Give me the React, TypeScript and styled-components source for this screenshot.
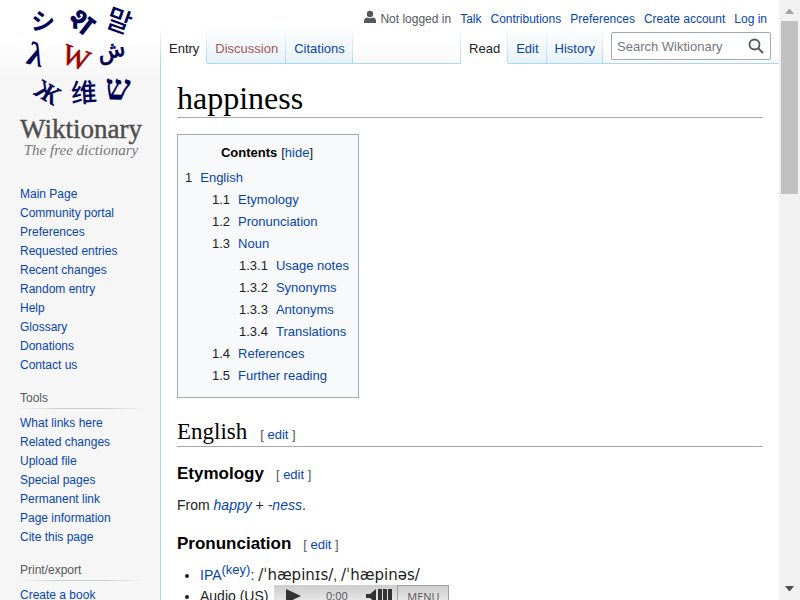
import React from "react";
import styled, { createGlobalStyle } from "styled-components";

const sans = `"Liberation Sans", Arial, sans-serif`;
const serif = `"Liberation Serif", Georgia, serif`;

const GlobalStyle = createGlobalStyle`
  * { box-sizing: border-box; }
  html, body { margin: 0; padding: 0; }
  body {
    font-family: ${sans};
    font-size: 14px;
    line-height: 22px;
    color: #202122;
    background: #f6f6f6;
    overflow: hidden;
  }
  a { color: #0645ad; text-decoration: none; }
  a:hover { text-decoration: underline; }
  ul, ol { list-style: none; margin: 0; padding: 0; }
  button { font-family: inherit; cursor: pointer; }
`;

const Page = styled.div`
  display: flex;
  height: 100vh;
  overflow: hidden;
  background: #f6f6f6 linear-gradient(#fff 50%, #f6f6f6 100%) 0 0 / 100% 80px no-repeat;
`;

const Sidebar = styled.aside`
  flex: 0 0 160px;
  font-size: 12px;
  line-height: 19px;
`;

const LogoLink = styled.a`
  display: block;
  height: 160px;
  svg { display: block; }
`;

const MainNav = styled.nav`
  padding: 25px 8px 0 20px;
`;

const Portal = styled.nav`
  padding: 14px 16px 0 20px;
`;

const PortalTitle = styled.h3`
  margin: 0 0 5px;
  border-bottom: 1px solid;
  border-image: linear-gradient(to right, #c8ccd100, #c8ccd1 33%, #c8ccd1 66%, #c8ccd100) 1;
  font-size: 12px;
  line-height: 19px;
  font-weight: 400;
  color: #54595d;
`;

const Column = styled.div`
  flex: 1;
  min-width: 0;
  display: flex;
  flex-direction: column;
`;

const Header = styled.header`
  flex: none;
  background: linear-gradient(#a7d7f9, #a7d7f9) 0 100% / 100% 1px no-repeat;
`;

const Personal = styled.ul`
  display: flex;
  justify-content: flex-end;
  gap: 9px;
  padding: 12px 12px 0 0;
  font-size: 12px;
  line-height: 14px;
  white-space: nowrap;
`;

const Status = styled.li`
  display: flex;
  gap: 4px;
  color: #54595d;
  svg { margin-top: -2px; }
`;

const NavRow = styled.div`
  display: flex;
  height: 38px;
`;

const Tabs = styled.ul<{ $end?: boolean }>`
  display: flex;
  margin-left: ${(p) => (p.$end ? "auto" : "0")};
  padding-left: 1px;
  background: linear-gradient(#fff, #a7d7f9) 0 0 / 1px 100% no-repeat;
`;

const Tab = styled.li<{ $active?: boolean }>`
  padding: 15px 8px 0;
  border-bottom: 1px solid ${(p) => (p.$active ? "#fff" : "#a7d7f9")};
  background: ${(p) =>
    p.$active
      ? "linear-gradient(#fff, #a7d7f9) 100% 0 / 1px 100% no-repeat, #fff"
      : "linear-gradient(#fff, #a7d7f9) 100% 0 / 1px 100% no-repeat, linear-gradient(#fff, #e8f2f8)"};
  font-size: 13px;
  line-height: 16px;
`;

const TabLink = styled.a<{ $tone?: "plain" | "missing" }>`
  color: ${(p) => (p.$tone === "plain" ? "#202122" : p.$tone === "missing" ? "#a55858" : "#0645ad")};
`;

const SearchForm = styled.form`
  display: flex;
  width: 160px;
  height: 28px;
  margin: 6px 8px 0;
  border: 1px solid #a2a9b1;
  border-radius: 2px;
  background: #fff;
`;

const SearchInput = styled.input`
  flex: 1;
  min-width: 0;
  padding: 0 0 0 5px;
  border: 0;
  outline: 0;
  background: none;
  font: 13px ${sans};
  color: #202122;
  &::placeholder { color: #72777d; opacity: 1; }
`;

const SearchButton = styled.button`
  display: grid;
  place-items: center;
  width: 28px;
  padding: 0;
  border: 0;
  background: none;
`;

const Content = styled.main`
  flex: 1;
  padding: 16px;
  border-left: 1px solid #a7d7f9;
  background: #fff;
`;

const Title = styled.h1`
  margin: 0 0 16px;
  border-bottom: 1px solid #a2a9b1;
  font: 400 32px/37px ${serif};
  color: #000;
`;

const Toc = styled.nav`
  width: fit-content;
  padding: 7px 9px 10px 7px;
  border: 1px solid #a2a9b1;
  background: #f8f9fa;
  font-size: 13px;
`;

const TocHead = styled.div`
  display: flex;
  justify-content: center;
  gap: 4px;
  margin-bottom: 3px;
`;

const TocTitle = styled.h2`
  margin: 0;
  font-size: 13px;
  line-height: 22px;
  color: #000;
`;

const TextButton = styled.button`
  padding: 0;
  border: 0;
  background: none;
  font-size: 13px;
  color: #0645ad;
`;

const TocItem = styled.li<{ $level: number }>`
  padding-left: ${(p) => (p.$level - 1) * 27}px;
  a { display: flex; gap: 8px; }
`;

const TocNumber = styled.span`
  color: #202122;
`;

const SectionTitle = styled.h2`
  display: flex;
  align-items: baseline;
  gap: 13px;
  margin: 17px 0 13px;
  padding-top: 2px;
  border-bottom: 1px solid #a2a9b1;
  font: 400 23px/29px ${serif};
  color: #000;
`;

const SubTitle = styled.h3`
  display: flex;
  align-items: baseline;
  gap: 12px;
  margin: 0 0 6px;
  font-size: 17px;
  line-height: 28px;
  color: #000;
`;

const EditMark = styled.span`
  font: 400 13px ${sans};
  color: #54595d;
`;

const Paragraph = styled.p`
  margin: 0 0 14px;
`;

const Sounds = styled.ul`
  margin-top: -1px;
  padding-left: 23px;
  list-style: disc;
`;

const Sound = styled.li`
  height: 22px;
  white-space: nowrap;
`;

const Key = styled.sup`
  font-size: 13px;
  line-height: 1;
`;

const Ipa = styled.span`
  font-family: "DejaVu Sans", sans-serif;
  font-size: 15px;
`;

const AudioLine = styled.div`
  display: flex;
  gap: 6px;
`;

const Player = styled.div`
  display: flex;
  align-items: stretch;
  width: 175px;
  height: 22px;
  background: linear-gradient(#cdcdcd, #f0f0f0);
  font: 11px "Open Sans", sans-serif;
  color: #555;
`;

const PlayerButton = styled.button<{ $width: number }>`
  display: grid;
  place-items: center;
  width: ${(p) => p.$width}px;
  padding: 0;
  border: 0;
  background: none;
`;

const Time = styled.span`
  flex: 1;
  text-align: center;
  line-height: 22px;
`;

const MenuButton = styled.button`
  width: 52px;
  padding: 0;
  border: 1px solid #a0a0a0;
  background: linear-gradient(#cdcdcd, #f0f0f0);
  font: 11px "Open Sans", sans-serif;
  color: #555;
`;

const Scrollbar = styled.div`
  flex: 0 0 21px;
  display: flex;
  flex-direction: column;
  justify-content: space-between;
  align-items: center;
  padding: 9px 0;
  background: #f1f1f1;
  svg { display: block; flex: none; }
`;

const Track = styled.div`
  flex: 1;
  width: 17px;
  margin: 7px 0;
`;

const Thumb = styled.div`
  height: 31%;
  background: #c1c1c1;
`;

const glyphs: { text: string; x: number; y: number; turn: number; size: number; font: string; fill?: string; weight?: number }[] = [
  { text: "シ", x: 43, y: 22, turn: 5, size: 24, font: "Noto Sans CJK JP", weight: 700 },
  { text: "श", x: 82, y: 21, turn: 38, size: 31, font: "Noto Sans Devanagari", weight: 700 },
  { text: "말", x: 119, y: 21, turn: 20, size: 27, font: "Noto Sans CJK KR", weight: 500 },
  { text: "λ", x: 36, y: 54, turn: 14, size: 33, font: "Liberation Serif", weight: 700 },
  { text: "W", x: 76, y: 57, turn: 20, size: 29, font: "Liberation Serif", fill: "#9b0000" },
  { text: "ش", x: 111, y: 50, turn: -12, size: 23, font: "DejaVu Sans" },
  { text: "Ж", x: 48, y: 92, turn: 30, size: 26, font: "Liberation Serif" },
  { text: "维", x: 84, y: 93, turn: -3, size: 26, font: "Noto Sans CJK SC", weight: 500 },
  { text: "ש", x: 118, y: 87, turn: 2, size: 36, font: "Liberation Serif", weight: 700 },
];

function Logo() {
  return (
    <svg width="160" height="160" viewBox="0 0 160 160" role="img" aria-label="Wiktionary, the free dictionary">
      {glyphs.map((g) => (
        <text
          key={g.text}
          x={g.x}
          y={g.y}
          dy="0.35em"
          textAnchor="middle"
          transform={`rotate(${g.turn} ${g.x} ${g.y})`}
          fontFamily={`"${g.font}", sans-serif`}
          fontSize={g.size}
          fontWeight={g.weight ?? 400}
          fill={g.fill ?? "#000055"}
          stroke={g.weight ? "none" : g.fill ?? "#000055"}
          strokeWidth="0.7"
        >
          {g.text}
        </text>
      ))}
      <text x="81" y="138" textAnchor="middle" fontFamily={serif} fontSize="27" fill="#4d4d4d" stroke="#4d4d4d" strokeWidth="0.4">Wiktionary</text>
      <text x="81" y="155" textAnchor="middle" fontFamily={serif} fontSize="15" fontStyle="italic" fill="#777">The free dictionary</text>
    </svg>
  );
}

function Links({ items }: { items: string[] }) {
  return (
    <ul>
      {items.map((item) => (
        <li key={item}><a href="#">{item}</a></li>
      ))}
    </ul>
  );
}

function EditLink() {
  return <EditMark>[ <a href="#">edit</a> ]</EditMark>;
}

const mainLinks = ["Main Page", "Community portal", "Preferences", "Requested entries", "Recent changes", "Random entry", "Help", "Glossary", "Donations", "Contact us"];
const toolLinks = ["What links here", "Related changes", "Upload file", "Special pages", "Permanent link", "Page information", "Cite this page"];
const accountLinks = ["Talk", "Contributions", "Preferences", "Create account", "Log in"];
const contents = [
  ["1", "English"],
  ["1.1", "Etymology"],
  ["1.2", "Pronunciation"],
  ["1.3", "Noun"],
  ["1.3.1", "Usage notes"],
  ["1.3.2", "Synonyms"],
  ["1.3.3", "Antonyms"],
  ["1.3.4", "Translations"],
  ["1.4", "References"],
  ["1.5", "Further reading"],
];

export default function App() {
  return (
    <>
      <GlobalStyle />
      <Page>
        <Sidebar>
          <LogoLink href="#"><Logo /></LogoLink>
          <MainNav><Links items={mainLinks} /></MainNav>
          <Portal>
            <PortalTitle>Tools</PortalTitle>
            <Links items={toolLinks} />
          </Portal>
          <Portal>
            <PortalTitle>Print/export</PortalTitle>
            <Links items={["Create a book"]} />
          </Portal>
        </Sidebar>
        <Column>
          <Header>
            <Personal>
              <Status>
                <svg width="12" height="14" viewBox="0 0 12 14" fill="#54595d">
                  <circle cx="6" cy="4" r="3.2" />
                  <path d="M0 13v-2C0 9 1 8 3 7.500c1.800 1 4.200 1 6 0 2 .5 3 1.500 3 3.500v2z" />
                </svg>
                Not logged in
              </Status>
              {accountLinks.map((item) => (
                <li key={item}><a href="#">{item}</a></li>
              ))}
            </Personal>
            <NavRow>
              <Tabs>
                <Tab $active><TabLink href="#" $tone="plain">Entry</TabLink></Tab>
                <Tab><TabLink href="#" $tone="missing">Discussion</TabLink></Tab>
                <Tab><TabLink href="#">Citations</TabLink></Tab>
              </Tabs>
              <Tabs $end>
                <Tab $active><TabLink href="#" $tone="plain">Read</TabLink></Tab>
                <Tab><TabLink href="#">Edit</TabLink></Tab>
                <Tab><TabLink href="#">History</TabLink></Tab>
              </Tabs>
              <SearchForm role="search">
                <SearchInput type="search" placeholder="Search Wiktionary" aria-label="Search Wiktionary" />
                <SearchButton type="button" aria-label="Search">
                  <svg width="16" height="16" viewBox="0 0 16 16" fill="none" stroke="#54595d" strokeWidth="1.8">
                    <circle cx="6.500" cy="6.500" r="5" />
                    <path d="M10 10l5 5" />
                  </svg>
                </SearchButton>
              </SearchForm>
            </NavRow>
          </Header>
          <Content>
            <Title>happiness</Title>
            <Toc aria-label="Contents">
              <TocHead>
                <TocTitle>Contents</TocTitle>
                <span>[<TextButton type="button">hide</TextButton>]</span>
              </TocHead>
              <ol>
                {contents.map(([number, label]) => (
                  <TocItem key={number} $level={number.split(".").length}>
                    <a href="#"><TocNumber>{number}</TocNumber>{label}</a>
                  </TocItem>
                ))}
              </ol>
            </Toc>
            <SectionTitle>English <EditLink /></SectionTitle>
            <SubTitle>Etymology <EditLink /></SubTitle>
            <Paragraph>From <i><a href="#">happy</a></i> + <i><a href="#">-ness</a></i>.</Paragraph>
            <SubTitle>Pronunciation <EditLink /></SubTitle>
            <Sounds>
              <Sound>
                <a href="#">IPA</a><Key><a href="#">(key)</a></Key>: <Ipa>/ˈhæpinɪs/</Ipa>, <Ipa>/ˈhæpinəs/</Ipa>
              </Sound>
              <Sound>
                <AudioLine>
                  Audio (US)
                  <Player>
                    <PlayerButton type="button" aria-label="Play" $width={38}>
                      <svg width="15" height="14" viewBox="0 0 15 14" fill="#333"><path d="M0 0l15 7-15 7z" /></svg>
                    </PlayerButton>
                    <Time>0:00</Time>
                    <PlayerButton type="button" aria-label="Volume" $width={36}>
                      <svg width="27" height="14" viewBox="0 0 27 14" fill="#333">
                        <path d="M0 5h4l6-5v14l-6-5H0zM12 0h4v14h-4zM17 0h4v14h-4zM22 0h4v14h-4z" />
                      </svg>
                    </PlayerButton>
                    <MenuButton type="button">MENU</MenuButton>
                  </Player>
                </AudioLine>
              </Sound>
            </Sounds>
          </Content>
        </Column>
        <Scrollbar aria-hidden="true">
          <svg width="9" height="5" viewBox="0 0 9 5" fill="#a3a3a3"><path d="M4 0h1l4 5H0z" /></svg>
          <Track><Thumb /></Track>
          <svg width="9" height="5" viewBox="0 0 9 5" fill="#505050"><path d="M0 0h9L5 5H4z" /></svg>
        </Scrollbar>
      </Page>
    </>
  );
}
